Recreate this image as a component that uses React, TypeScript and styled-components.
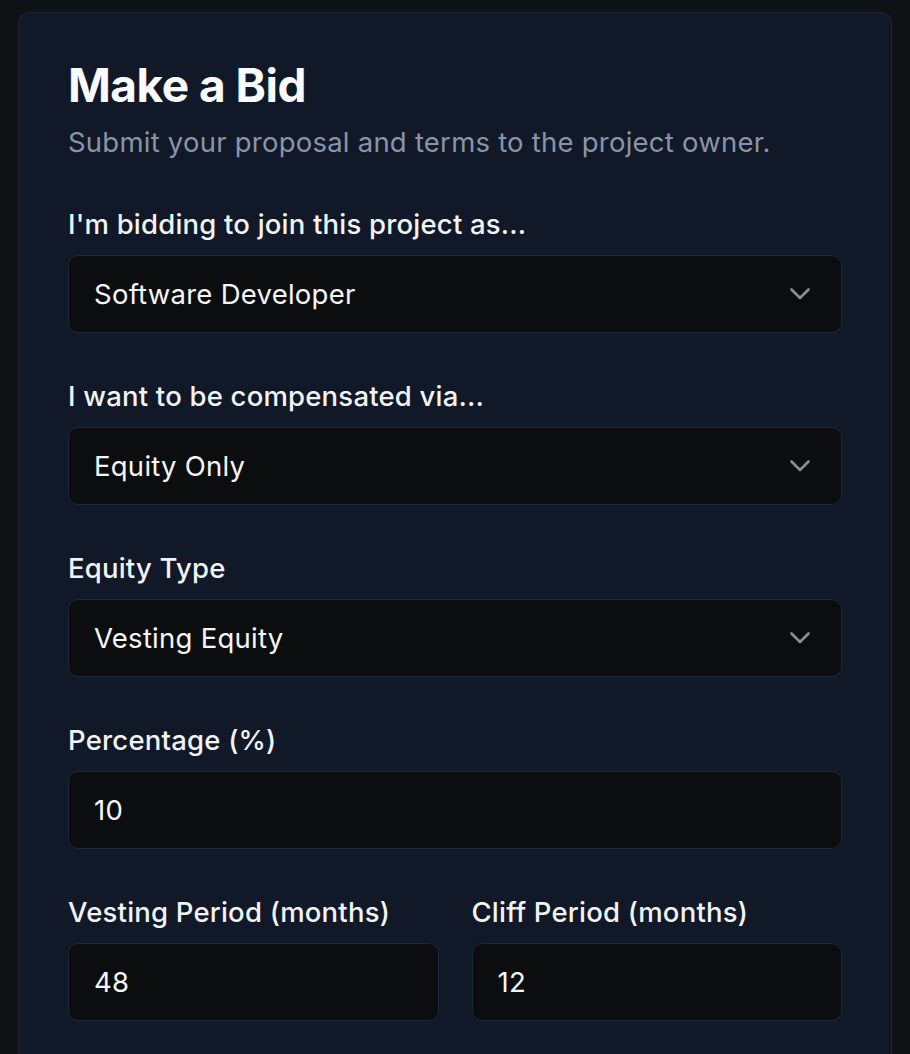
import React from "react";
import styled, { createGlobalStyle } from "styled-components";

const GlobalStyle = createGlobalStyle`
  html, body {
    margin: 0;
    padding: 0;
    background: #0f1214;
  }
  body {
    font-family: Inter, "Noto Sans", "Liberation Sans", sans-serif;
    -webkit-font-smoothing: antialiased;
  }
`;

const Page = styled.div`
  padding: 12px 18px 0;
  min-height: 1054px;
  box-sizing: border-box;
`;

const Card = styled.section`
  background: #111827;
  border: 1px solid #1e2636;
  border-bottom: none;
  border-radius: 12px 12px 0 0;
  padding: 48px 49px 60px;
  min-height: 1042px;
  box-sizing: border-box;
`;

const Title = styled.h1`
  margin: 0;
  color: #f8fafc;
  font-size: 46px;
  line-height: 48px;
  font-weight: 700;
  letter-spacing: -0.5px;
`;

const Subtitle = styled.p`
  margin: 17px 0 0;
  color: #8a94a8;
  font-size: 27.5px;
  line-height: 32px;
  font-weight: 400;
  letter-spacing: 0.23px;
`;

const Form = styled.form`
  margin-top: 50px;
  display: flex;
  flex-direction: column;
  gap: 47px;
`;

const Field = styled.div`
  display: flex;
  flex-direction: column;
  gap: 15px;
  min-width: 0;
`;

const Row = styled.div`
  display: grid;
  grid-template-columns: 1fr 1fr;
  gap: 33px;
`;

const Label = styled.label`
  color: #f1f3f6;
  font-size: 27.5px;
  line-height: 32px;
  font-weight: 500;
  letter-spacing: 0.2px;
`;

const Control = styled.div`
  height: 78px;
  box-sizing: border-box;
  background: #0c0d0f;
  border: 1.5px solid #1f2738;
  border-radius: 10px;
  display: flex;
  align-items: center;
  justify-content: space-between;
  padding: 0 31px 0 25px;
  color: #f5f6f8;
  font-size: 27.5px;
  font-weight: 400;
  letter-spacing: 0.25px;
`;

const Chevron = () => (
  <svg width="20" height="12" viewBox="0 0 20 12" fill="none">
    <path d="M1.5 1.5 L10 10 L18.5 1.5" stroke="#8b8d91" strokeWidth="2.6" strokeLinecap="round" strokeLinejoin="round" />
  </svg>
);

const Select: React.FC<{ value: string }> = ({ value }) => (
  <Control>
    <span>{value}</span>
    <Chevron />
  </Control>
);

export default function App() {
  return (
    <>
      <GlobalStyle />
      <Page>
        <Card>
          <Title>Make a Bid</Title>
          <Subtitle>Submit your proposal and terms to the project owner.</Subtitle>
          <Form>
            <Field>
              <Label>I'm bidding to join this project as...</Label>
              <Select value="Software Developer" />
            </Field>
            <Field>
              <Label>I want to be compensated via...</Label>
              <Select value="Equity Only" />
            </Field>
            <Field>
              <Label>Equity Type</Label>
              <Select value="Vesting Equity" />
            </Field>
            <Field>
              <Label>Percentage (%)</Label>
              <Control>10</Control>
            </Field>
            <Row>
              <Field>
                <Label>Vesting Period (months)</Label>
                <Control>48</Control>
              </Field>
              <Field>
                <Label>Cliff Period (months)</Label>
                <Control>12</Control>
              </Field>
            </Row>
          </Form>
        </Card>
      </Page>
    </>
  );
}
